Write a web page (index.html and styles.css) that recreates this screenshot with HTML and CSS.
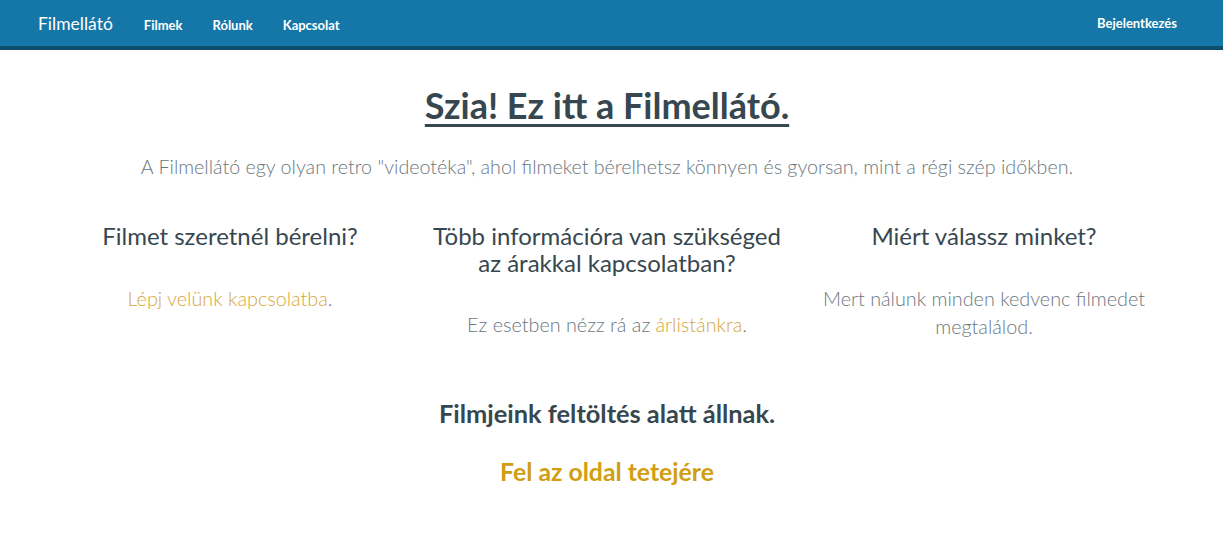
FILE: index.html
```html
<!DOCTYPE html>
<html lang="hu">
<head>
<meta charset="utf-8">
<title>Filmellátó</title>
<link rel="stylesheet" href="styles.css">
</head>
<body>
<nav class="navbar">
  <a class="brand" href="#">Filmellátó</a>
  <ul class="nav-links">
    <li><a href="#">Filmek</a></li>
    <li><a href="#">Rólunk</a></li>
    <li><a href="#">Kapcsolat</a></li>
  </ul>
  <a class="login" href="#">Bejelentkezés</a>
</nav>
<main class="container">
  <h1 class="title">Szia! Ez itt a Filmellátó.</h1>
  <p class="lead">A Filmellátó egy olyan retro "videotéka", ahol filmeket bérelhetsz könnyen és gyorsan, mint a régi szép időkben.</p>
  <div class="cols">
    <section class="col">
      <h3>Filmet szeretnél bérelni?</h3>
      <p><a href="#">Lépj velünk kapcsolatba</a>.</p>
    </section>
    <section class="col">
      <h3>Több információra van szükséged<br>az árakkal kapcsolatban?</h3>
      <p>Ez esetben nézz rá az <a href="#">árlistánkra</a>.</p>
    </section>
    <section class="col">
      <h3>Miért válassz minket?</h3>
      <p>Mert nálunk minden kedvenc filmedet megtalálod.</p>
    </section>
  </div>
  <h4 class="notice">Filmjeink feltöltés alatt állnak.</h4>
  <a class="top-link" href="#">Fel az oldal tetejére</a>
</main>
</body>
</html>
```
FILE: styles.css
```css
* { box-sizing: border-box; }
body {
  margin: 0;
  font-family: "Lato", "Liberation Sans", sans-serif;
  color: #3b4a52;
  background: #fff;
}
a { text-decoration: none; }
.navbar {
  display: flex;
  align-items: center;
  height: 50px;
  padding: 0 46px 0 38px;
  background: #1577a8;
  border-bottom: 4px solid #0d4e6d;
}
.brand {
  color: #fff;
  font-size: 17.5px;
  margin-right: 31px;
}
.nav-links {
  display: flex;
  gap: 30px;
  list-style: none;
  margin: 0;
  padding: 0;
  flex: 1;
}
.nav-links a, .login {
  color: #fff;
  font-size: 13px;
  font-weight: 700;
}
.container {
  max-width: 1140px;
  margin: 0 auto;
  padding-right: 9px;
  text-align: center;
}
.title {
  margin: 34px 0 0;
  font-size: 36px;
  font-weight: 700;
  text-decoration: underline;
  text-underline-offset: 5px;
  text-decoration-thickness: 3px;
  color: #37474f;
  line-height: 1.2;
}
.lead {
  margin: 28px 0 0;
  font-size: 19.7px;
  font-weight: 300;
  color: #6b7780;
}
.cols {
  display: grid;
  grid-template-columns: repeat(3, 1fr);
  margin-top: 35px;
}
.col { padding: 0 5px; }
.col h3 {
  margin: 10px 0 0;
  font-size: 24px;
  font-weight: 400;
  line-height: 1.1;
  color: #37474f;
}
.col p {
  margin: 34px 0 0;
  font-size: 19.8px;
  font-weight: 300;
  line-height: 28px;
  color: #6b7780;
}
.col a { color: #d6a63a; }
.notice {
  margin: 58px 0 0;
  font-size: 25.4px;
  font-weight: 700;
  color: #37474f;
}
.top-link {
  display: inline-block;
  margin-top: 29px;
  font-size: 24.8px;
  font-weight: 700;
  color: #d19e10;
}
```
